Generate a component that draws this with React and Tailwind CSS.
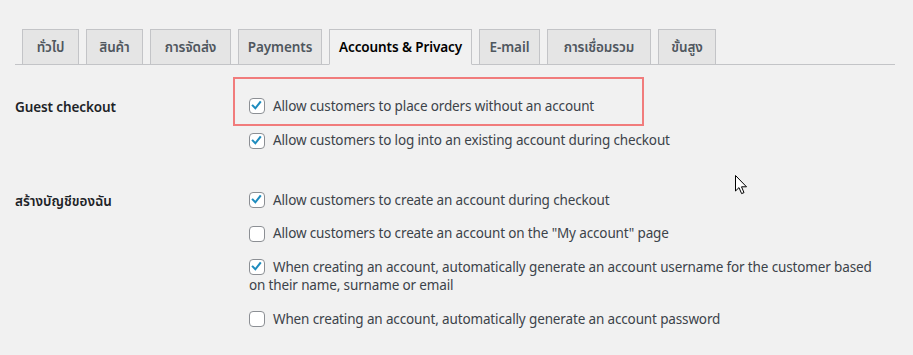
import React from "react";

const FONT = { fontFamily: '"Segoe UI", "Noto Sans", "Noto Sans Thai", "Open Sans", sans-serif' };

const tabs = [
  { label: "ทั่วไป", w: "w-[57px]" },
  { label: "สินค้า", w: "w-[57px]" },
  { label: "การจัดส่ง", w: "w-[81px]" },
  { label: "Payments", w: "w-[84px]" },
  { label: "Accounts & Privacy", w: "w-[143px]", active: true },
  { label: "E-mail", w: "w-[61px]" },
  { label: "การเชื่อมรวม", w: "w-[104px]" },
  { label: "ขั้นสูง", w: "w-[58px]" },
];

function Box({ checked }) {
  return (
    <span className="relative -top-[1px] mr-[8px] inline-block h-[16px] w-[16px] rounded-[4px] border border-[#8c8f94] bg-white align-middle">
      {checked && (
        <svg viewBox="0 0 16 16" className="absolute left-[0px] top-[0px] h-[14px] w-[14px]">
          <path d="M3.2 7.6 L6.1 10.6 L11.6 3.6" fill="none" stroke="#1e8cbe" strokeWidth="2.4" strokeLinecap="square" />
        </svg>
      )}
    </span>
  );
}

function Item({ checked, children, className = "" }) {
  return (
    <div className={"text-[13.5px] leading-[18px] tracking-[-0.14px] text-[#3c434a] " + className}>
      <Box checked={checked} />
      {children}
    </div>
  );
}

export default function App() {
  return (
    <div style={FONT} className="relative h-[355px] w-[913px] overflow-hidden bg-[#f1f1f1]">
      <div className="ml-[15px] mt-[29px] flex w-[880px] gap-[7px] border-b border-[#c3c4c7] pl-[7px]">
        {tabs.map((t) => (
          <div
            key={t.label}
            className={
              "-mb-[1px] flex h-[36px] items-center justify-center whitespace-nowrap border border-[#c3c4c7] pt-[1px] text-[13.5px] font-semibold tracking-[-0.1px] " +
              t.w +
              " " +
              (t.active ? "border-b-[#f1f1f1] bg-[#f1f1f1] text-black" : "bg-[#e5e5e5] text-[#50575e]")
            }
          >
            {t.label}
          </div>
        ))}
      </div>

      <div className="mt-[32px] flex pl-[15px]">
        <div className="w-[234px] pt-[1px] text-[13.5px] font-semibold leading-[18px] tracking-[-0.1px] text-[#1d2327]">Guest checkout</div>
        <div className="flex flex-col gap-[16px]">
          <Item checked>Allow customers to place orders without an account</Item>
          <Item checked>Allow customers to log into an existing account during checkout</Item>
        </div>
      </div>

      <div className="mt-[41px] flex pl-[15px]">
        <div className="w-[234px] pt-[1px] text-[13.5px] font-semibold leading-[18px] text-[#1d2327]">สร้างบัญชีของฉัน</div>
        <div className="flex flex-col gap-[15px]">
          <Item checked>Allow customers to create an account during checkout</Item>
          <Item>Allow customers to create an account on the "My account" page</Item>
          <Item checked>
            When creating an account, automatically generate an account username for the customer based
            <br />
            on their name, surname or email
          </Item>
          <Item className="mt-[1px]">When creating an account, automatically generate an account password</Item>
        </div>
      </div>

      <div className="absolute left-[233px] top-[77px] h-[49px] w-[411px] border-2 border-[#f17c7c]" />

      <svg className="absolute left-[735px] top-[175px]" width="13" height="21" viewBox="0 0 13 21">
        <path d="M0.5 0.5 L0.5 16 L4 12.6 L6.6 18.6 L9 17.6 L6.5 11.8 L11.5 11.8 Z" fill="white" stroke="black" strokeWidth="1" strokeLinejoin="miter" />
      </svg>
    </div>
  );
}
